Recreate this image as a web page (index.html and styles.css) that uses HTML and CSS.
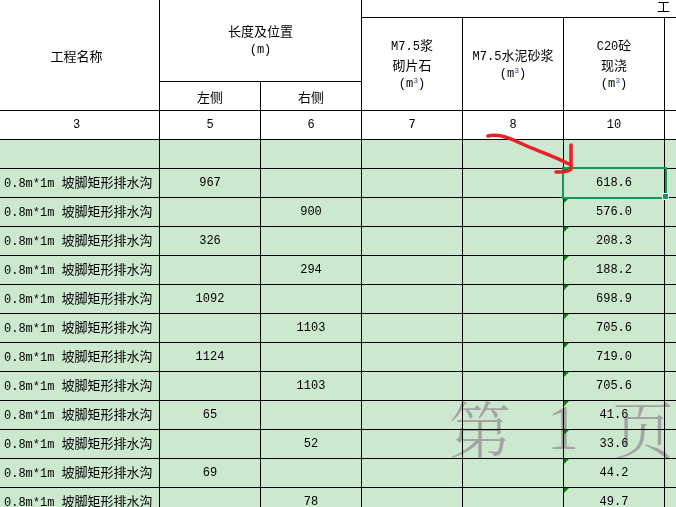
FILE: index.html
```html
<!DOCTYPE html>
<html lang="zh">
<head>
<meta charset="utf-8">
<title>工程数量表</title>
<link rel="stylesheet" href="styles.css">
</head>
<body>
<div class="sheet">
  <div class="grid">
    <div class="c hd name"><span class="cn">工程名称</span></div>
    <div class="c hd"><div><span class="cn">长度及位置</span><br>(m)</div></div>
    <div class="c hd group"><span class="cn">工　程　数　量</span></div>
    <div class="c hd tall"><div>M7.5<span class="cn">浆</span><br><span class="cn">砌片石</span><br>(m<sup>3</sup>)</div></div>
    <div class="c hd tall"><div>M7.5<span class="cn">水泥砂浆</span><br>(m<sup>3</sup>)</div></div>
    <div class="c hd tall"><div>C20<span class="cn">砼</span><br><span class="cn">现浇</span><br>(m<sup>3</sup>)</div></div>
    <div class="c hd tall"></div>
    <div class="c hd"><span class="cn">左侧</span></div>
    <div class="c hd"><span class="cn">右侧</span></div>

    <div class="c hd">3</div><div class="c hd">5</div><div class="c hd">6</div><div class="c hd">7</div><div class="c hd">8</div><div class="c hd">10</div><div class="c hd"></div>

    <div class="c"></div><div class="c"></div><div class="c"></div><div class="c"></div><div class="c"></div><div class="c"></div><div class="c"></div>

    <div class="c txt"><span>0.8m*1m <span class="cn">坡脚矩形排水沟</span></span></div><div class="c">967</div><div class="c"></div><div class="c"></div><div class="c"></div><div class="c tri">618.6<div class="sel"><div class="handle"></div></div></div><div class="c"></div>
    <div class="c txt"><span>0.8m*1m <span class="cn">坡脚矩形排水沟</span></span></div><div class="c"></div><div class="c">900</div><div class="c"></div><div class="c"></div><div class="c tri">576.0</div><div class="c"></div>
    <div class="c txt"><span>0.8m*1m <span class="cn">坡脚矩形排水沟</span></span></div><div class="c">326</div><div class="c"></div><div class="c"></div><div class="c"></div><div class="c tri">208.3</div><div class="c"></div>
    <div class="c txt"><span>0.8m*1m <span class="cn">坡脚矩形排水沟</span></span></div><div class="c"></div><div class="c">294</div><div class="c"></div><div class="c"></div><div class="c tri">188.2</div><div class="c"></div>
    <div class="c txt"><span>0.8m*1m <span class="cn">坡脚矩形排水沟</span></span></div><div class="c">1092</div><div class="c"></div><div class="c"></div><div class="c"></div><div class="c tri">698.9</div><div class="c"></div>
    <div class="c txt"><span>0.8m*1m <span class="cn">坡脚矩形排水沟</span></span></div><div class="c"></div><div class="c">1103</div><div class="c"></div><div class="c"></div><div class="c tri">705.6</div><div class="c"></div>
    <div class="c txt"><span>0.8m*1m <span class="cn">坡脚矩形排水沟</span></span></div><div class="c">1124</div><div class="c"></div><div class="c"></div><div class="c"></div><div class="c tri">719.0</div><div class="c"></div>
    <div class="c txt"><span>0.8m*1m <span class="cn">坡脚矩形排水沟</span></span></div><div class="c"></div><div class="c">1103</div><div class="c"></div><div class="c"></div><div class="c tri">705.6</div><div class="c"></div>
    <div class="c txt"><span>0.8m*1m <span class="cn">坡脚矩形排水沟</span></span></div><div class="c">65</div><div class="c"></div><div class="c"></div><div class="c"></div><div class="c tri">41.6</div><div class="c"></div>
    <div class="c txt"><span>0.8m*1m <span class="cn">坡脚矩形排水沟</span></span></div><div class="c"></div><div class="c">52</div><div class="c"></div><div class="c"></div><div class="c tri">33.6</div><div class="c"></div>
    <div class="c txt"><span>0.8m*1m <span class="cn">坡脚矩形排水沟</span></span></div><div class="c">69</div><div class="c"></div><div class="c"></div><div class="c"></div><div class="c tri">44.2</div><div class="c"></div>
    <div class="c txt"><span>0.8m*1m <span class="cn">坡脚矩形排水沟</span></span></div><div class="c"></div><div class="c">78</div><div class="c"></div><div class="c"></div><div class="c tri">49.7</div><div class="c"></div>
  </div>

  <div class="watermark"><span class="w1">第</span><span class="w2">1</span><span class="w3">页</span></div>

  <svg class="arrow" width="676" height="507" viewBox="0 0 676 507">
    <path d="M488 136 C 496 134, 506 136, 520 143 C 535 150, 552 155, 569 164" fill="none" stroke="#e8202a" stroke-width="3.5" stroke-linecap="round" stroke-linejoin="round"/>
    <path d="M571 145 L571 169 Q 570 172 556 172" fill="none" stroke="#e8202a" stroke-width="3.5" stroke-linecap="round" stroke-linejoin="round"/>
  </svg>
</div>
</body>
</html>
```

FILE: styles.css
```css
html, body {
  margin: 0;
  padding: 0;
  background: #ffffff;
}

.sheet {
  position: relative;
  width: 676px;
  height: 507px;
  overflow: hidden;
}

.grid {
  display: grid;
  grid-template-columns: 165px 100px 100px 100px 100px 100px 100px;
  grid-template-rows: 17px 63px 28px 28px;
  grid-auto-rows: 28px;
  gap: 1px;
  background: #000000;
  margin-left: -6px;
  width: 771px;
  font-family: "Liberation Mono", "Noto Sans CJK SC", monospace;
  font-size: 12px;
  color: #000000;
}

.c {
  position: relative;
  background: #cce8cf;
  display: flex;
  align-items: center;
  justify-content: center;
  text-align: center;
  line-height: 17px;
  white-space: nowrap;
}

.cn {
  font-family: "Noto Sans CJK SC", sans-serif;
  font-size: 13px;
}

.hd {
  background: #ffffff;
}

.name {
  grid-row: span 3;
}

.hd:nth-child(2) {
  grid-column: span 2;
  grid-row: span 2;
}

.group {
  grid-column: span 4;
  justify-content: flex-start;
  align-items: flex-start;
  padding-left: 295px;
  line-height: 11px;
}

.tall {
  grid-row: span 2;
}

.hd sup {
  font-size: 8px;
  line-height: 0;
  vertical-align: 4px;
  color: #2a4ab0;
}

.txt {
  justify-content: flex-start;
  padding-left: 10px;
}

.tri::before {
  content: "";
  position: absolute;
  top: 0;
  left: 0;
  border-top: 5px solid #0d7a12;
  border-right: 5px solid transparent;
}

.sel {
  position: absolute;
  top: -2px;
  left: -2px;
  right: -3px;
  bottom: -2px;
  border: 2.5px solid #15965b;
  z-index: 3;
}

.handle {
  position: absolute;
  right: -4px;
  bottom: -3px;
  width: 5px;
  height: 5px;
  background: #15965b;
  border: 1px solid #ffffff;
}

.watermark {
  position: absolute;
  left: 449px;
  top: 393px;
  display: flex;
  align-items: flex-start;
  font-family: "Noto Serif CJK SC", "Noto Sans CJK SC", serif;
  font-weight: 300;
  font-size: 62px;
  line-height: 70px;
  color: #a3a3a3;
  mix-blend-mode: darken;
  pointer-events: none;
  z-index: 4;
}

.w2 {
  font-family: "Liberation Serif", serif;
  margin-left: 36px;
  font-size: 64px;
}

.w3 {
  margin-left: 33px;
}

.arrow {
  position: absolute;
  left: 0;
  top: 0;
  pointer-events: none;
  z-index: 5;
}
```
